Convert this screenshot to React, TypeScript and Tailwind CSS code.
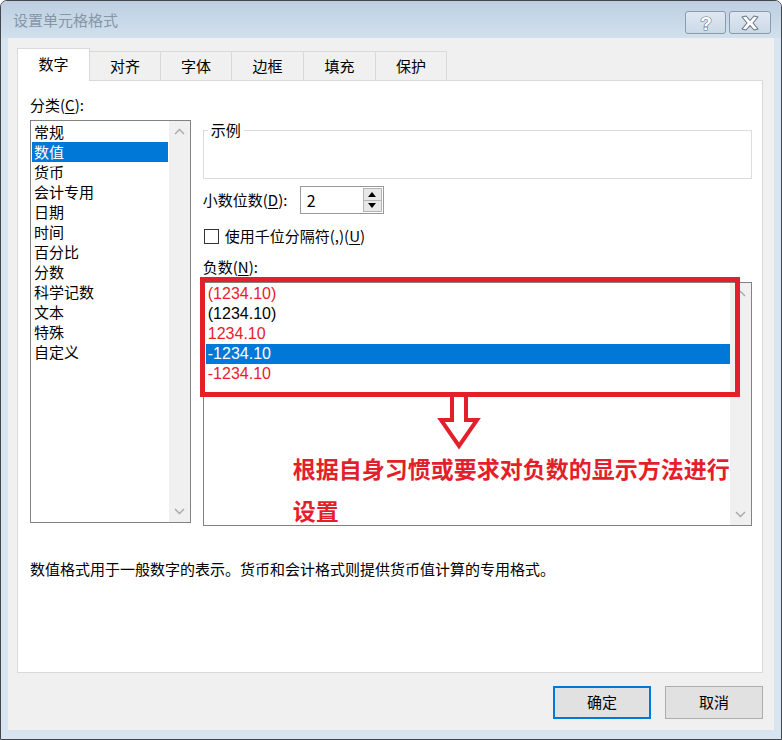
import React from "react";

const categories = ["常规", "数值", "货币", "会计专用", "日期", "时间", "百分比", "分数", "科学记数", "文本", "特殊", "自定义"];

const negatives = [
  { text: "(1234.10)", red: true },
  { text: "(1234.10)", red: false },
  { text: "1234.10", red: true },
  { text: "-1234.10", red: false, selected: true },
  { text: "-1234.10", red: true },
];

const tabs = ["对齐", "字体", "边框", "填充", "保护"];

function Chevron({ up }: { up?: boolean }) {
  return (
    <svg width="11" height="7" viewBox="0 0 11 7" className="block">
      <polyline
        points={up ? "1,6 5.5,1.5 10,6" : "1,1 5.5,5.5 10,1"}
        fill="none"
        stroke="#a8a8a8"
        strokeWidth="1.4"
      />
    </svg>
  );
}

function ScrollBar() {
  return (
    <div className="flex w-[21px] flex-col items-center justify-between bg-[#f0f0f0] py-[7px]">
      <Chevron up />
      <Chevron />
    </div>
  );
}

function Underlined({ children }: { children: React.ReactNode }) {
  return <span className="underline underline-offset-2">{children}</span>;
}

export default function App() {
  return (
    <div className="relative flex h-[740px] w-[782px] flex-col overflow-hidden rounded-t-[7px] border border-[#43474d] bg-[#d8e4f0] font-['Noto_Sans_CJK_SC','Liberation_Sans',sans-serif] text-[15px] text-black">
      {/* title bar */}
      <div className="flex h-[37px] shrink-0 items-center bg-gradient-to-b from-[#bccfe1] to-[#d2e0ed] pl-[12px] pr-[10px]">
        <span className="flex-1 text-[15px] leading-none text-[#8696a6]">设置单元格格式</span>
        <div className="flex gap-[3px] self-start pt-[10px]">
          <div className="flex h-[23px] w-[41px] items-center justify-center rounded-[3px] border border-[#8b9bac] bg-gradient-to-b from-[#dfe8f1] to-[#cbd9e7]">
            <svg width="16" height="20" viewBox="0 0 16 20">
              <text
                x="8"
                y="17"
                textAnchor="middle"
                fontSize="19"
                fontWeight="700"
                fontFamily="Liberation Sans, sans-serif"
                fill="#ffffff"
                stroke="#66768a"
                strokeWidth="1.2"
                paintOrder="stroke"
              >
                ?
              </text>
            </svg>
          </div>
          <div className="flex h-[23px] w-[42px] items-center justify-center rounded-[3px] border border-[#8b9bac] bg-gradient-to-b from-[#dfe8f1] to-[#cbd9e7]">
            <svg width="20" height="16" viewBox="0 0 20 16">
              <path
                d="M2 2 L6 1 L10 5.5 L14 1 L18 2 L13 8 L18 14 L14 15 L10 10.5 L6 15 L2 14 L7 8 Z"
                fill="#ffffff"
                stroke="#66768a"
                strokeWidth="1.1"
                strokeLinejoin="round"
              />
            </svg>
          </div>
        </div>
      </div>

      {/* client area */}
      <div className="mb-[9px] ml-[7px] mr-[7px] flex flex-1 flex-col bg-[#f0f0f0] pl-[9px] pt-[10px]">
        {/* tabs */}
        <div className="relative z-10 -mb-px flex h-[33px] items-end">
          <div className="flex h-[33px] w-[73px] items-center justify-center border-l border-r border-t border-[#d9d9d9] bg-white pb-[2px]">
            数字
          </div>
          {tabs.map((t, i) => (
            <div
              key={t}
              className={`flex h-[30px] items-center justify-center border border-l-0 border-[#d9d9d9] bg-[#f0f0f0] ${
                i === 2 || i === 3 ? "w-[72px]" : "w-[71px]"
              }`}
            >
              {t}
            </div>
          ))}
        </div>

        {/* panel */}
        <div className="flex h-[593px] w-[746px] flex-col border border-[#d9d9d9] bg-white pl-[12px] pr-[10px] pt-[14px]">
          <div className="flex gap-[12px]">
            {/* category column */}
            <div className="flex w-[161px] flex-col">
              <div className="h-[20px] leading-[20px]">
                分类(<Underlined>C</Underlined>):
              </div>
              <div className="mt-[5px] flex h-[403px] border border-[#828282]">
                <div className="flex flex-1 flex-col p-[1px]">
                  {categories.map((c, i) => (
                    <div
                      key={c}
                      className={`h-[20px] px-[2px] leading-[20px] ${i === 1 ? "bg-[#0078d7] text-white" : ""}`}
                    >
                      {c}
                    </div>
                  ))}
                </div>
                <ScrollBar />
              </div>
            </div>

            {/* right column */}
            <div className="flex w-[550px] flex-col">
              <fieldset className="mt-[25px] h-[59px] border border-[#dcdcdc] pt-0">
                <legend className="ml-[4px] px-[3px] leading-[20px]">示例</legend>
              </fieldset>

              <div className="mt-[7px] flex h-[28px] items-center">
                <div className="w-[97px]">
                  小数位数(<Underlined>D</Underlined>):
                </div>
                <div className="flex h-[28px] w-[84px] border border-[#9a9a9a] bg-white">
                  <div className="flex-1 pl-[6px] text-[16px] leading-[26px]">2</div>
                  <div className="flex w-[20px] flex-col py-[1px] pr-[1px]">
                    <div className="flex flex-1 items-center justify-center border border-[#b5b5b5] bg-[#e8e8e8]">
                      <svg width="8" height="5" viewBox="0 0 8 5">
                        <polygon points="0,5 4,0 8,5" fill="#000" />
                      </svg>
                    </div>
                    <div className="flex flex-1 items-center justify-center border border-t-0 border-[#b5b5b5] bg-[#e8e8e8]">
                      <svg width="8" height="5" viewBox="0 0 8 5">
                        <polygon points="0,0 8,0 4,5" fill="#000" />
                      </svg>
                    </div>
                  </div>
                </div>
              </div>

              <div className="mt-[12px] flex h-[21px] items-center">
                <div className="ml-[1px] h-[15px] w-[15px] border border-[#333333] bg-white" />
                <span className="ml-[6px]">
                  使用千位分隔符(,)(<Underlined>U</Underlined>)
                </span>
              </div>

              <div className="mt-[10px] h-[20px] leading-[20px]">
                负数(<Underlined>N</Underlined>):
              </div>

              <div className="relative mt-[5px] flex h-[244px] border border-[#828282]">
                <div className="flex flex-1 flex-col pl-[2px] pt-[1px]">
                  {negatives.map((n, i) => (
                    <div
                      key={i}
                      className={`h-[20px] px-[2px] font-['Liberation_Sans',sans-serif] text-[16px] leading-[20px] ${
                        n.selected ? "bg-[#0078d7] text-white" : n.red ? "text-[#e8202c]" : "text-black"
                      }`}
                    >
                      {n.text}
                    </div>
                  ))}
                </div>
                <ScrollBar />

                {/* annotation: red frame */}
                <div className="absolute left-[-4px] top-[-6px] h-[120px] w-[540px] border-[5px] border-[#e31f2b]" />
                {/* annotation: arrow */}
                <svg
                  className="absolute left-[233px] top-[109px]"
                  width="44"
                  height="60"
                  viewBox="0 0 44 60"
                >
                  <polygon
                    points="15,0 29,0 29,28 40,28 22,54 4,28 15,28"
                    fill="none"
                    stroke="#e31f2b"
                    strokeWidth="4"
                    strokeLinejoin="miter"
                  />
                </svg>
                {/* annotation: note */}
                <div className="absolute left-[89px] top-[164px] whitespace-nowrap text-[23px] font-bold leading-[42px] text-[#e31f2b]">
                  <div>根据自身习惯或要求对负数的显示方法进行</div>
                  <div>设置</div>
                </div>
              </div>
            </div>
          </div>

          <div className="mt-[33px] h-[20px] text-[15px] leading-[20px]">
            数值格式用于一般数字的表示。货币和会计格式则提供货币值计算的专用格式。
          </div>
        </div>

        {/* buttons */}
        <div className="mt-[13px] flex w-[746px] justify-end gap-[14px]">
          <button className="flex h-[33px] w-[98px] items-center justify-center border-2 border-[#0078d7] bg-[#e1e1e1]">
            确定
          </button>
          <button className="flex h-[33px] w-[98px] items-center justify-center border border-[#adadad] bg-[#e1e1e1]">
            取消
          </button>
        </div>
      </div>
    </div>
  );
}
